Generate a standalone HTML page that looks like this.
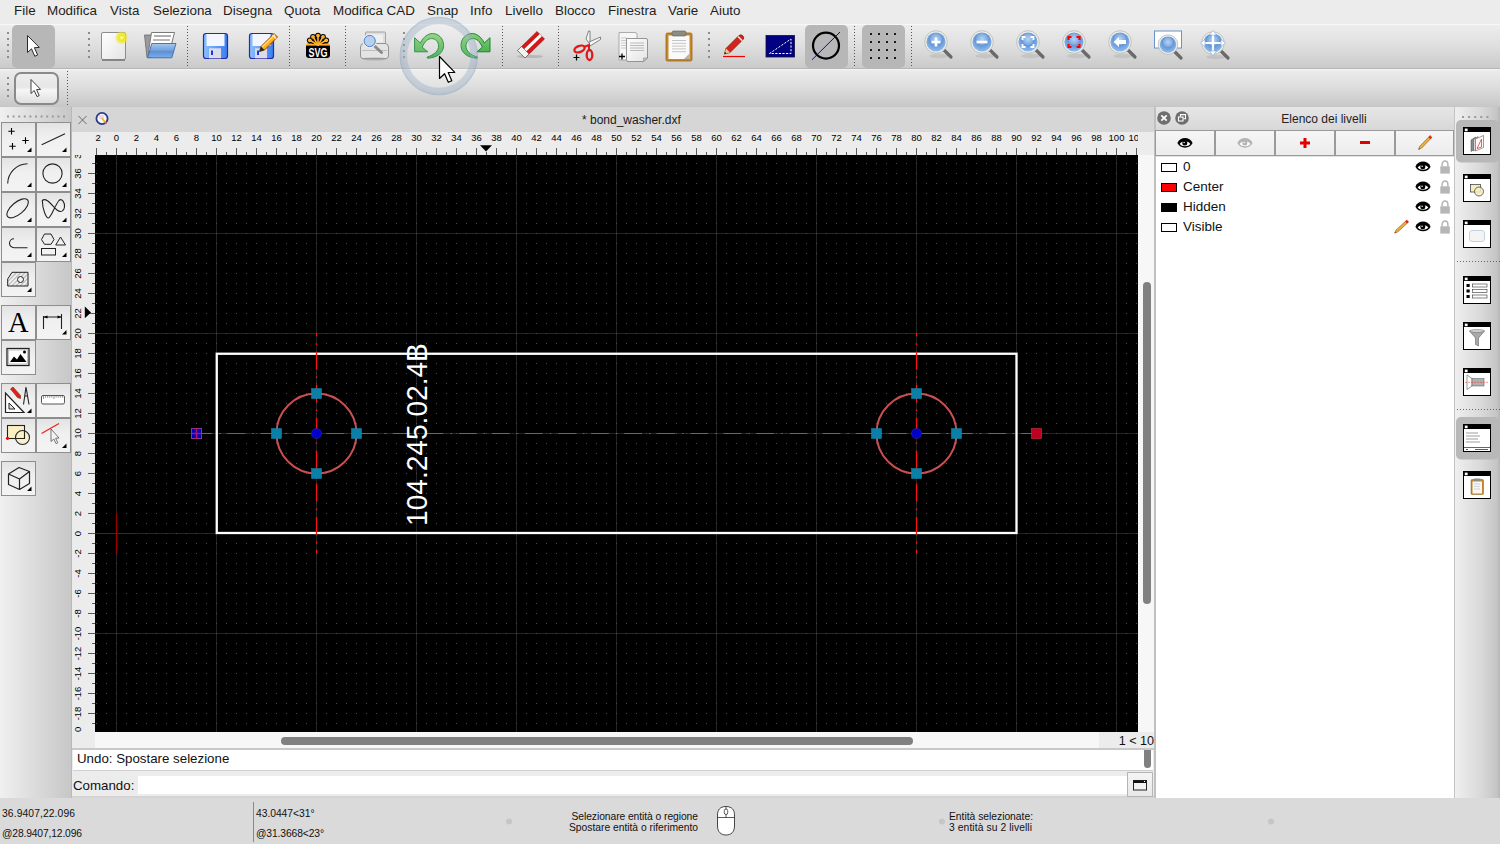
<!DOCTYPE html><html><head><meta charset="utf-8"><style>
*{margin:0;padding:0;box-sizing:border-box}
html,body{width:1500px;height:844px;overflow:hidden;background:#ececec;font-family:"Liberation Sans",sans-serif;color:#1a1a1a;position:relative}
.a{position:absolute}
.menu{position:absolute;left:0;top:0;width:1500px;height:24px;background:#ececec;font-size:13.4px}
.menu span{position:absolute;top:3px;color:#1e1e1e}
.tb1{position:absolute;left:0;top:24px;width:1500px;height:45px;background:linear-gradient(#ededed,#e0e0e0 45%,#cacaca);border-top:1px solid #f7f7f7;border-bottom:1px solid #b6b6b6}
.tb2{position:absolute;left:0;top:69px;width:1500px;height:38px;background:linear-gradient(#ececec,#dedede 45%,#c8c8c8);border-top:1px solid #f4f4f4;border-bottom:1px solid #b4b4b4}
.hdl{position:absolute;width:2px;background:repeating-linear-gradient(#8a8a8a 0 2px,transparent 2px 6px)}
.sep{position:absolute;width:1px;background:repeating-linear-gradient(#6a6a6a 0 1px,transparent 1px 3px)}
.pressed{position:absolute;background:#b7b7b7;border-radius:5px}
</style></head><body>

<div class="menu">
<span style="left:14px">File</span>
<span style="left:47px">Modifica</span>
<span style="left:110px">Vista</span>
<span style="left:153px">Seleziona</span>
<span style="left:223px">Disegna</span>
<span style="left:284px">Quota</span>
<span style="left:333px">Modifica CAD</span>
<span style="left:427px">Snap</span>
<span style="left:470px">Info</span>
<span style="left:505px">Livello</span>
<span style="left:555px">Blocco</span>
<span style="left:608px">Finestra</span>
<span style="left:668px">Varie</span>
<span style="left:710px">Aiuto</span>
</div>
<div class="tb1"></div>
<div class="tb2"></div>
<svg class="a" style="left:0;top:0" width="1500" height="107" viewBox="0 0 1500 107"><defs>
<linearGradient id="gBlue" x1="0" y1="0" x2="0" y2="1"><stop offset="0" stop-color="#a9c8ec"/><stop offset="0.5" stop-color="#6f9fdc"/><stop offset="0.55" stop-color="#5d8fd4"/><stop offset="1" stop-color="#7aaee8"/></linearGradient>
<radialGradient id="gYel"><stop offset="0" stop-color="#ffffe0"/><stop offset="0.35" stop-color="#f0e818"/><stop offset="0.7" stop-color="#eee830" stop-opacity="0.7"/><stop offset="1" stop-color="#f0f000" stop-opacity="0"/></radialGradient>
<linearGradient id="gFloppy" x1="0" y1="0" x2="1" y2="0"><stop offset="0" stop-color="#8cc0ff"/><stop offset="1" stop-color="#3a7ef0"/></linearGradient>
<linearGradient id="gGreen" x1="0" y1="0" x2="0" y2="1"><stop offset="0" stop-color="#86d070"/><stop offset="1" stop-color="#3aa648"/></linearGradient>
<radialGradient id="gLens" cx="0.5" cy="0.35" r="0.6"><stop offset="0" stop-color="#b8d4f4"/><stop offset="0.5" stop-color="#7aa8e0"/><stop offset="0.52" stop-color="#6494d4"/><stop offset="1" stop-color="#8ab8ec"/></radialGradient>
<linearGradient id="gPaper" x1="0" y1="0" x2="1" y2="1"><stop offset="0" stop-color="#ffffff"/><stop offset="1" stop-color="#e4e4e4"/></linearGradient>
</defs><rect x="7" y="32" width="2" height="2" fill="#8c8c8c"/><rect x="7" y="38" width="2" height="2" fill="#8c8c8c"/><rect x="7" y="44" width="2" height="2" fill="#8c8c8c"/><rect x="7" y="50" width="2" height="2" fill="#8c8c8c"/><rect x="7" y="56" width="2" height="2" fill="#8c8c8c"/><rect x="88" y="32" width="2" height="2" fill="#8c8c8c"/><rect x="88" y="38" width="2" height="2" fill="#8c8c8c"/><rect x="88" y="44" width="2" height="2" fill="#8c8c8c"/><rect x="88" y="50" width="2" height="2" fill="#8c8c8c"/><rect x="88" y="56" width="2" height="2" fill="#8c8c8c"/><rect x="403" y="32" width="2" height="2" fill="#8c8c8c"/><rect x="403" y="38" width="2" height="2" fill="#8c8c8c"/><rect x="403" y="44" width="2" height="2" fill="#8c8c8c"/><rect x="403" y="50" width="2" height="2" fill="#8c8c8c"/><rect x="403" y="56" width="2" height="2" fill="#8c8c8c"/><rect x="708" y="32" width="2" height="2" fill="#8c8c8c"/><rect x="708" y="38" width="2" height="2" fill="#8c8c8c"/><rect x="708" y="44" width="2" height="2" fill="#8c8c8c"/><rect x="708" y="50" width="2" height="2" fill="#8c8c8c"/><rect x="708" y="56" width="2" height="2" fill="#8c8c8c"/><rect x="7" y="77" width="2" height="2" fill="#8c8c8c"/><rect x="7" y="83" width="2" height="2" fill="#8c8c8c"/><rect x="7" y="89" width="2" height="2" fill="#8c8c8c"/><rect x="7" y="95" width="2" height="2" fill="#8c8c8c"/><line x1="187.5" y1="26" x2="187.5" y2="66" stroke="#555" stroke-width="1" stroke-dasharray="1 2"/><line x1="289.5" y1="26" x2="289.5" y2="66" stroke="#555" stroke-width="1" stroke-dasharray="1 2"/><line x1="345.5" y1="26" x2="345.5" y2="66" stroke="#555" stroke-width="1" stroke-dasharray="1 2"/><line x1="502.5" y1="26" x2="502.5" y2="66" stroke="#555" stroke-width="1" stroke-dasharray="1 2"/><line x1="558.5" y1="26" x2="558.5" y2="66" stroke="#555" stroke-width="1" stroke-dasharray="1 2"/><line x1="854.5" y1="26" x2="854.5" y2="66" stroke="#555" stroke-width="1" stroke-dasharray="1 2"/><line x1="911.5" y1="26" x2="911.5" y2="66" stroke="#555" stroke-width="1" stroke-dasharray="1 2"/><line x1="67.5" y1="71" x2="67.5" y2="106" stroke="#555" stroke-width="1" stroke-dasharray="1 2"/><rect x="12" y="25" width="43" height="43" rx="5" fill="#b7b7b7"/><rect x="805" y="25" width="43" height="43" rx="5" fill="#b7b7b7"/><rect x="862" y="25" width="43" height="43" rx="5" fill="#b7b7b7"/><path d="M27.5 35.5 L27.5 52.5 L31.5 48.8 L34.8 56.3 L37.6 55 L34.4 47.7 L39.3 47.4 Z" fill="#fff" stroke="#2a2a2a" stroke-width="1" stroke-linejoin="round"/><defs><linearGradient id="gBtn2" x1="0" y1="0" x2="0" y2="1"><stop offset="0" stop-color="#efefef"/><stop offset="0.45" stop-color="#e6e6e6"/><stop offset="0.55" stop-color="#f6f6f6"/><stop offset="1" stop-color="#dedede"/></linearGradient></defs><rect x="15" y="73" width="43" height="31" rx="6" fill="url(#gBtn2)" stroke="#8a8a8a" stroke-width="2"/><path d="M31 79.5 L31 93.5 L34.2 90.5 L37 96.6 L39.2 95.6 L36.6 89.6 L40.6 89.4 Z" fill="#fff" stroke="#2a2a2a" stroke-width="0.9" stroke-linejoin="round"/><rect x="101.5" y="32.5" width="24" height="27" rx="1.5" fill="url(#gPaper)" stroke="#8c8c8c" stroke-width="1"/><line x1="102" y1="60.2" x2="125" y2="60.2" stroke="#7a7a7a" stroke-width="1.3"/><circle cx="121.7" cy="37.7" r="7" fill="url(#gYel)"/><path d="M144.5 35 L152 35 L152 57.5 L147 57.5 Z" fill="#9a9a9a" stroke="#6a6a6a" stroke-width="0.8"/><path d="M151.5 32.5 L174.5 32.5 L171.5 44 L148.5 52 Z" fill="#fff" stroke="#7a7a7a" stroke-width="1"/><rect x="154" y="35" width="17" height="2" fill="#b0b0b0"/><rect x="153" y="39" width="17" height="2" fill="#b8b8b8"/><path d="M151.8 43.5 L176 43.5 L171.8 57.8 L147.5 57.8 Z" fill="url(#gBlue)" stroke="#3a6ab0" stroke-width="0.9"/><rect x="203.5" y="33.5" width="24" height="25" rx="2.5" fill="url(#gFloppy)" stroke="#2828a8" stroke-width="1.2"/><rect x="206.5" y="34" width="18" height="12" fill="#f4f6ff"/><rect x="209" y="48.3" width="12" height="10" fill="#dcdce8"/><rect x="211" y="50.5" width="2" height="4.5" fill="#1a3ae0"/><rect x="249.5" y="33.5" width="24" height="25" rx="2.5" fill="url(#gFloppy)" stroke="#2828a8" stroke-width="1.2"/><rect x="252.5" y="34" width="18" height="12" fill="#f4f6ff"/><rect x="255" y="48.3" width="12" height="10" fill="#dcdce8"/><rect x="257" y="50.5" width="2" height="4.5" fill="#1a3ae0"/><path d="M259.5 51.5 L261 46.5 L274 33.5 L277.5 37 L264.5 50 Z" fill="#ffb020" stroke="#a03a00" stroke-width="1" stroke-linejoin="round"/><path d="M262 47 L275 34.5" stroke="#ffe070" stroke-width="1.2"/><path d="M272.5 35 L276 38.5" stroke="#e8e8e8" stroke-width="1.6"/><path d="M259.5 51.5 L261 46.5 L264.5 50 Z" fill="#203020"/><rect x="306" y="43.5" width="24" height="14.5" rx="3" fill="#000"/><line x1="318" y1="45" x2="309.8" y2="40.3" stroke="#000" stroke-width="3.6" stroke-linecap="round"/><line x1="318" y1="45" x2="313" y2="36.8" stroke="#000" stroke-width="3.6" stroke-linecap="round"/><line x1="318" y1="45" x2="318" y2="35.6" stroke="#000" stroke-width="3.6" stroke-linecap="round"/><line x1="318" y1="45" x2="323" y2="36.8" stroke="#000" stroke-width="3.6" stroke-linecap="round"/><line x1="318" y1="45" x2="326.2" y2="40.3" stroke="#000" stroke-width="3.6" stroke-linecap="round"/><circle cx="309.8" cy="40.3" r="2.9" fill="#000"/><circle cx="313" cy="36.8" r="2.9" fill="#000"/><circle cx="318" cy="35.6" r="2.9" fill="#000"/><circle cx="323" cy="36.8" r="2.9" fill="#000"/><circle cx="326.2" cy="40.3" r="2.9" fill="#000"/><line x1="318" y1="45" x2="309.8" y2="40.3" stroke="#ffb030" stroke-width="1.6" stroke-linecap="round"/><circle cx="309.8" cy="40.3" r="1.9" fill="#ffb030"/><line x1="318" y1="45" x2="313" y2="36.8" stroke="#ffb030" stroke-width="1.6" stroke-linecap="round"/><circle cx="313" cy="36.8" r="1.9" fill="#ffb030"/><line x1="318" y1="45" x2="318" y2="35.6" stroke="#ffb030" stroke-width="1.6" stroke-linecap="round"/><circle cx="318" cy="35.6" r="1.9" fill="#ffb030"/><line x1="318" y1="45" x2="323" y2="36.8" stroke="#ffb030" stroke-width="1.6" stroke-linecap="round"/><circle cx="323" cy="36.8" r="1.9" fill="#ffb030"/><line x1="318" y1="45" x2="326.2" y2="40.3" stroke="#ffb030" stroke-width="1.6" stroke-linecap="round"/><circle cx="326.2" cy="40.3" r="1.9" fill="#ffb030"/><rect x="306" y="44" width="24" height="1.6" fill="#ffb030"/><text x="318" y="57" font-size="13.5" font-weight="bold" fill="#fff" text-anchor="middle" font-family="Liberation Sans" textLength="19" lengthAdjust="spacingAndGlyphs">SVG</text><rect x="365.5" y="32" width="20" height="14" rx="1" fill="#dedede" stroke="#9a9a9a" stroke-width="0.9"/><rect x="368" y="34.5" width="15" height="8" fill="#efefef"/><path d="M360.5 47 Q360.5 43.5 364 43.5 L385 43.5 Q388.5 43.5 388.5 47 L388.5 56 Q388.5 58.5 386 58.5 L363 58.5 Q360.5 58.5 360.5 56 Z" fill="#e4e4e4" stroke="#8a8a8a" stroke-width="0.9"/><line x1="362" y1="50.5" x2="387" y2="50.5" stroke="#b4b4b4" stroke-width="0.8"/><ellipse cx="374.5" cy="59" rx="12" ry="1.6" fill="#9a9a9a" opacity="0.6"/><line x1="374" y1="45.5" x2="381.5" y2="52.5" stroke="#8a8a8a" stroke-width="3" stroke-linecap="round"/><circle cx="369.7" cy="41" r="6.3" fill="#b8d0ee" stroke="#f0f0f0" stroke-width="1.6"/><circle cx="369.7" cy="41" r="5.6" fill="none" stroke="#4a80c8" stroke-width="1"/><g><path d="M414.6 37.7 L420.3 43 C423.5 36.5 428.5 33.5 432.3 33.5 C439 33.5 443.6 39 443.6 45.5 C443.6 52.5 437.5 57.8 427.5 58.2 L427 57.2 C434.5 54.8 438.6 50.8 438.6 46 C438.6 41.8 435.6 38.6 431.6 38.6 C428 38.6 425 41 422.2 47.2 L427.7 51.8 L414.6 51.8 Z" fill="url(#gGreen)" stroke="#14843a" stroke-width="1" stroke-linejoin="round"/></g><g transform="translate(904.6 0) scale(-1 1)"><path d="M414.6 37.7 L420.3 43 C423.5 36.5 428.5 33.5 432.3 33.5 C439 33.5 443.6 39 443.6 45.5 C443.6 52.5 437.5 57.8 427.5 58.2 L427 57.2 C434.5 54.8 438.6 50.8 438.6 46 C438.6 41.8 435.6 38.6 431.6 38.6 C428 38.6 425 41 422.2 47.2 L427.7 51.8 L414.6 51.8 Z" fill="url(#gGreen)" stroke="#14843a" stroke-width="1" stroke-linejoin="round"/></g><ellipse cx="530" cy="56.5" rx="13" ry="1.6" fill="#9a9a9a" opacity="0.5"/><path d="M517.5 50.5 L537 31.5 L544.5 39 L525 58 Z" fill="#d41818" stroke="#8a1010" stroke-width="0.6"/><path d="M521.2 54.2 L540.8 35.2" stroke="#fff" stroke-width="3"/><path d="M517.5 50.5 L521.5 46.5 L529 54 L525 58 Z" fill="#f2f2f2" stroke="#555" stroke-width="0.6"/><path d="M586 39 L588.5 31 L590 31 L590 44 Z" fill="#f4f4f4" stroke="#6a6a6a" stroke-width="0.8"/><path d="M589 42 L600.5 37 L600.5 39.5 L590 46 Z" fill="#f4f4f4" stroke="#6a6a6a" stroke-width="0.8"/><ellipse cx="579.5" cy="49" rx="5.3" ry="3" transform="rotate(-20 579.5 49)" fill="none" stroke="#e01818" stroke-width="2.3"/><ellipse cx="589.5" cy="55" rx="2.8" ry="5" fill="none" stroke="#e01818" stroke-width="2.3"/><path d="M584 47 L589 45 L589 50" fill="none" stroke="#e01818" stroke-width="2"/><path d="M573.5 57.5 L579.5 57.5 M576.5 54.5 L576.5 60.5" stroke="#000" stroke-width="1.2"/><path d="M619 32.5 L635 32.5 Q637 32.5 637 34.5 L637 60 L619 60 Z" fill="#f6f6f6" stroke="#9a9a9a" stroke-width="0.8"/><line x1="621" y1="38.0" x2="627" y2="38.0" stroke="#c0c0c0" stroke-width="0.8"/><line x1="621" y1="40.5" x2="627" y2="40.5" stroke="#c0c0c0" stroke-width="0.8"/><line x1="621" y1="43.0" x2="627" y2="43.0" stroke="#c0c0c0" stroke-width="0.8"/><line x1="621" y1="45.5" x2="627" y2="45.5" stroke="#c0c0c0" stroke-width="0.8"/><line x1="621" y1="48.0" x2="627" y2="48.0" stroke="#c0c0c0" stroke-width="0.8"/><path d="M626.5 38.5 L646 38.5 Q647.5 38.5 647.5 40 L647.5 58 L643.5 61.5 L628 61.5 Q626.5 61.5 626.5 60 Z" fill="url(#gPaper)" stroke="#8a8a8a" stroke-width="0.9"/><path d="M643.5 61.5 L643.5 58 L647.5 58 Z" fill="#c8c8c8" stroke="#8a8a8a" stroke-width="0.6"/><line x1="630" y1="43.0" x2="644" y2="43.0" stroke="#b8b8b8" stroke-width="1"/><line x1="630" y1="45.5" x2="644" y2="45.5" stroke="#b8b8b8" stroke-width="1"/><line x1="630" y1="48.0" x2="644" y2="48.0" stroke="#b8b8b8" stroke-width="1"/><line x1="630" y1="50.5" x2="644" y2="50.5" stroke="#b8b8b8" stroke-width="1"/><path d="M619 56.5 L625 56.5 M622 53.5 L622 59.5" stroke="#000" stroke-width="1.3"/><rect x="666" y="33" width="26" height="28" rx="1.5" fill="#c8862a" stroke="#9a6418" stroke-width="0.8"/><rect x="668.5" y="35.5" width="21" height="23.5" fill="#fafafa"/><rect x="672" y="31" width="14" height="5" rx="1.5" fill="#8c8c80" stroke="#5a5a50" stroke-width="0.6"/><line x1="672" y1="40.5" x2="686" y2="40.5" stroke="#c4c4c4" stroke-width="1"/><line x1="672" y1="43.3" x2="686" y2="43.3" stroke="#c4c4c4" stroke-width="1"/><line x1="672" y1="46.1" x2="686" y2="46.1" stroke="#c4c4c4" stroke-width="1"/><line x1="672" y1="48.9" x2="686" y2="48.9" stroke="#c4c4c4" stroke-width="1"/><line x1="672" y1="51.7" x2="686" y2="51.7" stroke="#c4c4c4" stroke-width="1"/><path d="M684 59 L689.5 53.5 L689.5 59 Z" fill="#b0b0b0"/><line x1="723" y1="56.5" x2="745" y2="56.5" stroke="#e00" stroke-width="1.2"/><path d="M724.5 54 L726 48.5 L739 35.5 Q741 34 743 36 Q744.5 38 743 39.5 L730 52.5 Z" fill="#d82020" stroke="#7a3000" stroke-width="0.9" stroke-linejoin="round"/><path d="M738 36.5 L742.3 40.8" stroke="#e8e8e8" stroke-width="1.6"/><path d="M724.5 54 L726 48.5 L730 52.5 Z" fill="#e8c890"/><path d="M724.3 54.2 L725 51.8 L726.6 53.5 Z" fill="#222"/><rect x="766" y="35.5" width="28.5" height="21.5" fill="#000080" stroke="#101040" stroke-width="0.8"/><path d="M769.5 53.5 L791 39 L791 53.5 Z" fill="none" stroke="#fff" stroke-width="1" stroke-dasharray="2.2 1.4"/><circle cx="826" cy="45.6" r="13" fill="none" stroke="#000" stroke-width="2.2"/><line x1="812" y1="59.8" x2="840" y2="32" stroke="#0000ff" stroke-width="1"/><rect x="870" y="33" width="2" height="2" fill="#1a1a1a"/><rect x="870" y="41" width="2" height="2" fill="#1a1a1a"/><rect x="870" y="49" width="2" height="2" fill="#1a1a1a"/><rect x="870" y="57" width="2" height="2" fill="#1a1a1a"/><rect x="878" y="33" width="2" height="2" fill="#1a1a1a"/><rect x="878" y="41" width="2" height="2" fill="#1a1a1a"/><rect x="878" y="49" width="2" height="2" fill="#1a1a1a"/><rect x="878" y="57" width="2" height="2" fill="#1a1a1a"/><rect x="886" y="33" width="2" height="2" fill="#1a1a1a"/><rect x="886" y="41" width="2" height="2" fill="#1a1a1a"/><rect x="886" y="49" width="2" height="2" fill="#1a1a1a"/><rect x="886" y="57" width="2" height="2" fill="#1a1a1a"/><rect x="894" y="33" width="2" height="2" fill="#1a1a1a"/><rect x="894" y="41" width="2" height="2" fill="#1a1a1a"/><rect x="894" y="49" width="2" height="2" fill="#1a1a1a"/><rect x="894" y="57" width="2" height="2" fill="#1a1a1a"/><line x1="944" y1="50" x2="951" y2="57" stroke="#6a6a6a" stroke-width="3.2" stroke-linecap="round"/><ellipse cx="939" cy="56" rx="10" ry="2.2" fill="#000" opacity="0.08"/><circle cx="936" cy="42" r="11.3" fill="#efefea" stroke="#b8b8b0" stroke-width="0.8"/><circle cx="936" cy="42" r="9.6" fill="url(#gLens)"/><path d="M931.5 42 L940.5 42 M936 37.5 L936 46.5" stroke="#fff" stroke-width="2.6"/><line x1="990" y1="50" x2="997" y2="57" stroke="#6a6a6a" stroke-width="3.2" stroke-linecap="round"/><ellipse cx="985" cy="56" rx="10" ry="2.2" fill="#000" opacity="0.08"/><circle cx="982" cy="42" r="11.3" fill="#efefea" stroke="#b8b8b0" stroke-width="0.8"/><circle cx="982" cy="42" r="9.6" fill="url(#gLens)"/><path d="M976.5 42 L987.5 42" stroke="#fff" stroke-width="2.6"/><line x1="1036" y1="50" x2="1043" y2="57" stroke="#6a6a6a" stroke-width="3.2" stroke-linecap="round"/><ellipse cx="1031" cy="56" rx="10" ry="2.2" fill="#000" opacity="0.08"/><circle cx="1028" cy="42" r="11.3" fill="#efefea" stroke="#b8b8b0" stroke-width="0.8"/><circle cx="1028" cy="42" r="9.6" fill="url(#gLens)"/><path d="M1022.5 40 L1022.5 37 L1025.5 37 M1030.5 37 L1033.5 37 L1033.5 40 M1033.5 44 L1033.5 47 L1030.5 47 M1025.5 47 L1022.5 47 L1022.5 44" fill="none" stroke="#fff" stroke-width="1.8"/><line x1="1082" y1="50" x2="1089" y2="57" stroke="#6a6a6a" stroke-width="3.2" stroke-linecap="round"/><ellipse cx="1077" cy="56" rx="10" ry="2.2" fill="#000" opacity="0.08"/><circle cx="1074" cy="42" r="11.3" fill="#efefea" stroke="#b8b8b0" stroke-width="0.8"/><circle cx="1074" cy="42" r="9.6" fill="url(#gLens)"/><path d="M1068.5 40 L1068.5 37 L1071.5 37 M1076.5 37 L1079.5 37 L1079.5 40 M1079.5 44 L1079.5 47 L1076.5 47 M1071.5 47 L1068.5 47 L1068.5 44" fill="none" stroke="#f00" stroke-width="2.2"/><line x1="1128" y1="50" x2="1135" y2="57" stroke="#6a6a6a" stroke-width="3.2" stroke-linecap="round"/><ellipse cx="1123" cy="56" rx="10" ry="2.2" fill="#000" opacity="0.08"/><circle cx="1120" cy="42" r="11.3" fill="#efefea" stroke="#b8b8b0" stroke-width="0.8"/><circle cx="1120" cy="42" r="9.6" fill="url(#gLens)"/><path d="M1113.5 42 L1119 37 L1119 40 L1126 40 L1126 44 L1119 44 L1119 47 Z" fill="#fff"/><rect x="1154.5" y="31" width="27" height="17" fill="#fff" stroke="#6a90c8" stroke-width="1"/><line x1="1174" y1="51" x2="1181" y2="58" stroke="#6a6a6a" stroke-width="3.2" stroke-linecap="round"/><circle cx="1168" cy="44.6" r="9.8" fill="#efefea" stroke="#b8b8b0" stroke-width="0.8"/><circle cx="1168" cy="44.6" r="8.2" fill="url(#gLens)"/><line x1="1221" y1="51" x2="1228" y2="58" stroke="#6a6a6a" stroke-width="3.2" stroke-linecap="round"/><ellipse cx="1216" cy="57" rx="10" ry="2.2" fill="#000" opacity="0.08"/><circle cx="1213" cy="43" r="11.3" fill="#efefea" stroke="#b8b8b0" stroke-width="0.8"/><circle cx="1213" cy="43" r="9.6" fill="url(#gLens)"/><path d="M1213 31.5 L1213 54.5 M1201.5 43 L1224.5 43" stroke="#fff" stroke-width="2.2"/><path d="M1209.5 35 L1213 30.5 L1216.5 35 Z M1209.5 51 L1213 55.5 L1216.5 51 Z M1205 39.5 L1200.5 43 L1205 46.5 Z M1221 39.5 L1225.5 43 L1221 46.5 Z" fill="#fff" stroke="#6a9ad8" stroke-width="0.5"/><circle cx="438.8" cy="56" r="35.5" fill="#ffffff" fill-opacity="0.13" stroke="#9ab0c6" stroke-opacity="0.42" stroke-width="7.5"/><circle cx="438.8" cy="56" r="38.6" fill="none" stroke="#8aa2ba" stroke-opacity="0.25" stroke-width="1.2"/><path d="M439.5 56.5 L439.5 78.5 L444.6 73.7 L448.3 82.3 L451.8 80.8 L448.2 72.5 L454.8 72.3 Z" fill="#fff" stroke="#000" stroke-width="1.2" stroke-linejoin="round"/></svg>
<div class="a" style="left:0;top:106px;width:1500px;height:2px;background:#c6c6c6"></div>
<div class="a" style="left:0;top:107px;width:71px;height:691px;background:linear-gradient(90deg,#f0f0f0,#d9d9d9 55%,#c7c7c7)"></div>
<div class="a" style="left:71px;top:107px;width:1px;height:691px;background:#b9b9b9"></div>
<div class="a" style="left:1px;top:122px;width:35px;height:35px;border:1px solid #8e8e8e;background:linear-gradient(#e3e3e3,#f0f0f0 45%,#f3f3f3)"></div><div class="a" style="left:36px;top:122px;width:35px;height:35px;border:1px solid #8e8e8e;background:linear-gradient(#e3e3e3,#f0f0f0 45%,#f3f3f3)"></div><div class="a" style="left:1px;top:157px;width:35px;height:35px;border:1px solid #8e8e8e;background:linear-gradient(#e3e3e3,#f0f0f0 45%,#f3f3f3)"></div><div class="a" style="left:36px;top:157px;width:35px;height:35px;border:1px solid #8e8e8e;background:linear-gradient(#e3e3e3,#f0f0f0 45%,#f3f3f3)"></div><div class="a" style="left:1px;top:192px;width:35px;height:35px;border:1px solid #8e8e8e;background:linear-gradient(#e3e3e3,#f0f0f0 45%,#f3f3f3)"></div><div class="a" style="left:36px;top:192px;width:35px;height:35px;border:1px solid #8e8e8e;background:linear-gradient(#e3e3e3,#f0f0f0 45%,#f3f3f3)"></div><div class="a" style="left:1px;top:227px;width:35px;height:35px;border:1px solid #8e8e8e;background:linear-gradient(#e3e3e3,#f0f0f0 45%,#f3f3f3)"></div><div class="a" style="left:36px;top:227px;width:35px;height:35px;border:1px solid #8e8e8e;background:linear-gradient(#e3e3e3,#f0f0f0 45%,#f3f3f3)"></div><div class="a" style="left:1px;top:262px;width:35px;height:35px;border:1px solid #8e8e8e;background:linear-gradient(#e3e3e3,#f0f0f0 45%,#f3f3f3)"></div><div class="a" style="left:1px;top:305px;width:35px;height:35px;border:1px solid #8e8e8e;background:linear-gradient(#e3e3e3,#f0f0f0 45%,#f3f3f3)"></div><div class="a" style="left:36px;top:305px;width:35px;height:35px;border:1px solid #8e8e8e;background:linear-gradient(#e3e3e3,#f0f0f0 45%,#f3f3f3)"></div><div class="a" style="left:1px;top:340px;width:35px;height:35px;border:1px solid #8e8e8e;background:linear-gradient(#e3e3e3,#f0f0f0 45%,#f3f3f3)"></div><div class="a" style="left:1px;top:383px;width:35px;height:35px;border:1px solid #8e8e8e;background:linear-gradient(#e3e3e3,#f0f0f0 45%,#f3f3f3)"></div><div class="a" style="left:36px;top:383px;width:35px;height:35px;border:1px solid #8e8e8e;background:linear-gradient(#e3e3e3,#f0f0f0 45%,#f3f3f3)"></div><div class="a" style="left:1px;top:418px;width:35px;height:35px;border:1px solid #8e8e8e;background:linear-gradient(#e3e3e3,#f0f0f0 45%,#f3f3f3)"></div><div class="a" style="left:36px;top:418px;width:35px;height:35px;border:1px solid #8e8e8e;background:linear-gradient(#e3e3e3,#f0f0f0 45%,#f3f3f3)"></div><div class="a" style="left:1px;top:461px;width:35px;height:35px;border:1px solid #8e8e8e;background:linear-gradient(#e3e3e3,#f0f0f0 45%,#f3f3f3)"></div><svg class="a" style="left:0;top:107px" width="72" height="400" viewBox="0 107 72 400"><rect x="7.0" y="115.5" width="2" height="2" fill="#9a9a9a"/><rect x="12.6" y="115.5" width="2" height="2" fill="#9a9a9a"/><rect x="18.2" y="115.5" width="2" height="2" fill="#9a9a9a"/><rect x="23.8" y="115.5" width="2" height="2" fill="#9a9a9a"/><rect x="29.4" y="115.5" width="2" height="2" fill="#9a9a9a"/><rect x="35.0" y="115.5" width="2" height="2" fill="#9a9a9a"/><rect x="40.6" y="115.5" width="2" height="2" fill="#9a9a9a"/><rect x="46.2" y="115.5" width="2" height="2" fill="#9a9a9a"/><rect x="51.8" y="115.5" width="2" height="2" fill="#9a9a9a"/><rect x="57.4" y="115.5" width="2" height="2" fill="#9a9a9a"/><rect x="63.0" y="115.5" width="2" height="2" fill="#9a9a9a"/><path d="M8.3 131.3 L14.7 131.3 M11.5 128.10000000000002 L11.5 134.5" stroke="#000" stroke-width="1.1"/><path d="M22.3 140.5 L28.7 140.5 M25.5 137.3 L25.5 143.7" stroke="#000" stroke-width="1.1"/><path d="M9.3 146.3 L15.7 146.3 M12.5 143.10000000000002 L12.5 149.5" stroke="#000" stroke-width="1.1"/><path d="M27.0 152 L31.5 152 L31.5 147.5 Z" fill="#000"/><line x1="41.7" y1="144.8" x2="65" y2="133.7" stroke="#222" fill="none" stroke-width="1.1"/><path d="M62.0 152 L66.5 152 L66.5 147.5 Z" fill="#000"/><path d="M7.7 183.5 A20 20 0 0 1 27.5 163.8" stroke="#222" fill="none" stroke-width="1.1"/><path d="M27.0 187 L31.5 187 L31.5 182.5 Z" fill="#000"/><circle cx="52.5" cy="173.5" r="9.6" stroke="#222" fill="none" stroke-width="1.1"/><path d="M62.0 187 L66.5 187 L66.5 182.5 Z" fill="#000"/><ellipse cx="17.6" cy="208.3" rx="13" ry="6" transform="rotate(-40 17.6 208.3)" stroke="#222" fill="none" stroke-width="1.1"/><path d="M27.0 222 L31.5 222 L31.5 217.5 Z" fill="#000"/><path d="M42.3 200.5 C42.5 209 46 218 48.5 218 C51 218 55 205 59 200.5 C62 197.5 65 203 64.5 207 C64 211 61 213 57 210 C53 207 46.5 196.5 42.3 200.5 Z" stroke="#222" fill="none" stroke-width="1.1"/><path d="M62.0 222 L66.5 222 L66.5 217.5 Z" fill="#000"/><path d="M14 238.8 A4.5 4.5 0 0 0 14 247.8 L27.5 247.8" stroke="#222" fill="none" stroke-width="1.1"/><path d="M27.0 257 L31.5 257 L31.5 252.5 Z" fill="#000"/><path d="M44.5 234 L51 234 L54 239.5 L51 244.3 L44.5 244.3 L41.5 239.5 Z" stroke="#222" fill="none" stroke-width="1"/><path d="M55.7 245 L60.5 237 L65.5 245 Z" stroke="#222" fill="none" stroke-width="1"/><rect x="41.5" y="248.5" width="14" height="6.5" stroke="#222" fill="none" stroke-width="1"/><path d="M62.0 257 L66.5 257 L66.5 252.5 Z" fill="#000"/><defs><pattern id="hatch" width="3" height="3" patternUnits="userSpaceOnUse" patternTransform="rotate(45)"><line x1="0" y1="0" x2="0" y2="3" stroke="#666" stroke-width="0.9"/></pattern></defs><path d="M7.7 286 L7.7 279 L12 272.3 L28 272.3 L28 286 Z" fill="url(#hatch)" stroke="#222" stroke-width="1"/><circle cx="20.5" cy="279.5" r="3" fill="#f2f2f2" stroke="#222" stroke-width="1"/><path d="M27.0 292 L31.5 292 L31.5 287.5 Z" fill="#000"/><text x="18.3" y="332.2" font-size="28.5" fill="#000" text-anchor="middle" font-family="Liberation Serif">A</text><path d="M43.5 316 L43.5 329 M61.5 314 L61.5 329 M43.5 317 L61.5 317" stroke="#222" stroke-width="1.1"/><path d="M43.5 317 L47.5 315.5 L47.5 318.5 Z M61.5 317 L57.5 315.5 L57.5 318.5 Z" fill="#000"/><path d="M62.0 334.5 L66.5 334.5 L66.5 330.0 Z" fill="#000"/><rect x="7" y="348.5" width="22" height="17" fill="#fff" stroke="#222" stroke-width="1.3"/><rect x="8.5" y="350" width="19" height="14" fill="none" stroke="#888" stroke-width="0.5"/><path d="M10 362 L14 356.5 L17 359.5 L20.5 354 L26.5 362 Z" fill="#000"/><circle cx="24.5" cy="351.9" r="1.5" fill="#000"/><path d="M5.5 393 L5.5 412.5 L24 412.5 Z" fill="#fff" stroke="#222" stroke-width="1.2"/><path d="M9 403 L9 409 L15 409 Z" fill="#e0e0e0" stroke="#222" stroke-width="1"/><path d="M10.5 389 L13 387 L20.5 395.5 L20.5 398.5 L17.5 397.5 Z" fill="#e02020" stroke="#7a2000" stroke-width="0.6"/><path d="M26 387 L23.5 404.5 M26 387 L29 404.5 M24.5 396 L28 396" stroke="#222" stroke-width="1.1" fill="none"/><path d="M27.0 413 L31.5 413 L31.5 408.5 Z" fill="#000"/><rect x="41.5" y="395.5" width="23" height="8.5" rx="1.5" fill="#fff" stroke="#555" stroke-width="1"/><line x1="43.5" y1="396" x2="43.5" y2="399" stroke="#555" stroke-width="0.6"/><line x1="45.6" y1="396" x2="45.6" y2="397.8" stroke="#555" stroke-width="0.6"/><line x1="47.7" y1="396" x2="47.7" y2="397.8" stroke="#555" stroke-width="0.6"/><line x1="49.8" y1="396" x2="49.8" y2="397.8" stroke="#555" stroke-width="0.6"/><line x1="51.9" y1="396" x2="51.9" y2="397.8" stroke="#555" stroke-width="0.6"/><line x1="54.0" y1="396" x2="54.0" y2="399" stroke="#555" stroke-width="0.6"/><line x1="56.1" y1="396" x2="56.1" y2="397.8" stroke="#555" stroke-width="0.6"/><line x1="58.2" y1="396" x2="58.2" y2="397.8" stroke="#555" stroke-width="0.6"/><line x1="60.3" y1="396" x2="60.3" y2="397.8" stroke="#555" stroke-width="0.6"/><line x1="62.4" y1="396" x2="62.4" y2="397.8" stroke="#555" stroke-width="0.6"/><rect x="7.5" y="425.5" width="17" height="13" fill="#fbf0c4" stroke="#222" stroke-width="1.1"/><circle cx="22.5" cy="437.5" r="7" fill="#fbf0c4" fill-opacity="0.85" stroke="#222" stroke-width="1.1"/><path d="M15.5 438.5 L24.5 438.5 L24.5 430.7" fill="none" stroke="#222" stroke-width="1.1"/><circle cx="7.5" cy="438.3" r="1.6" fill="#f00"/><line x1="41.5" y1="433.5" x2="59" y2="423.5" stroke="#f02020" stroke-width="1.3"/><path d="M51 429 L51 441.5 L53.8 439 L56 443.6 L57.8 442.8 L55.6 438.2 L59 438 Z" fill="#f4f4f4" stroke="#555" stroke-width="0.8" stroke-linejoin="round"/><path d="M62.0 448 L66.5 448 L66.5 443.5 Z" fill="#000"/><path d="M8.5 474 L19 467.5 L29.5 471.5 L29.5 483.5 L19.5 489.5 L8.5 484.5 Z M8.5 474 L19.5 479 L29.5 471.5 M19.5 479 L19.5 489.5" fill="none" stroke="#222" stroke-width="1.2" stroke-linejoin="round"/><path d="M27.0 491 L31.5 491 L31.5 486.5 Z" fill="#000"/></svg>
<div class="a" style="left:72px;top:107px;width:1082px;height:25px;background:#d6d6d6"></div>
<div class="a" style="left:582px;top:113px;font-size:12px;color:#1a1a1a">* bond_washer.dxf</div>
<div class="a" style="left:72px;top:132px;width:1082px;height:23px;background:#ececec"></div>
<div class="a" style="left:72px;top:132px;width:23px;height:616px;background:#ececec"></div>
<svg class="a" style="left:95px;top:132px" width="1043" height="23" viewBox="95 132 1043 23"><line x1="96.5" y1="148" x2="96.5" y2="155" stroke="#5a5a5a"/><text x="96.5" y="141" font-size="9.5" text-anchor="middle" fill="#000" font-family="Liberation Sans">-2</text><line x1="106.5" y1="152" x2="106.5" y2="155" stroke="#5a5a5a"/><line x1="116.5" y1="148" x2="116.5" y2="155" stroke="#5a5a5a"/><text x="116.5" y="141" font-size="9.5" text-anchor="middle" fill="#000" font-family="Liberation Sans">0</text><line x1="126.5" y1="152" x2="126.5" y2="155" stroke="#5a5a5a"/><line x1="136.5" y1="148" x2="136.5" y2="155" stroke="#5a5a5a"/><text x="136.5" y="141" font-size="9.5" text-anchor="middle" fill="#000" font-family="Liberation Sans">2</text><line x1="146.5" y1="152" x2="146.5" y2="155" stroke="#5a5a5a"/><line x1="156.5" y1="148" x2="156.5" y2="155" stroke="#5a5a5a"/><text x="156.5" y="141" font-size="9.5" text-anchor="middle" fill="#000" font-family="Liberation Sans">4</text><line x1="166.5" y1="152" x2="166.5" y2="155" stroke="#5a5a5a"/><line x1="176.5" y1="148" x2="176.5" y2="155" stroke="#5a5a5a"/><text x="176.5" y="141" font-size="9.5" text-anchor="middle" fill="#000" font-family="Liberation Sans">6</text><line x1="186.5" y1="152" x2="186.5" y2="155" stroke="#5a5a5a"/><line x1="196.5" y1="148" x2="196.5" y2="155" stroke="#5a5a5a"/><text x="196.5" y="141" font-size="9.5" text-anchor="middle" fill="#000" font-family="Liberation Sans">8</text><line x1="206.5" y1="152" x2="206.5" y2="155" stroke="#5a5a5a"/><line x1="216.5" y1="148" x2="216.5" y2="155" stroke="#5a5a5a"/><text x="216.5" y="141" font-size="9.5" text-anchor="middle" fill="#000" font-family="Liberation Sans">10</text><line x1="226.5" y1="152" x2="226.5" y2="155" stroke="#5a5a5a"/><line x1="236.5" y1="148" x2="236.5" y2="155" stroke="#5a5a5a"/><text x="236.5" y="141" font-size="9.5" text-anchor="middle" fill="#000" font-family="Liberation Sans">12</text><line x1="246.5" y1="152" x2="246.5" y2="155" stroke="#5a5a5a"/><line x1="256.5" y1="148" x2="256.5" y2="155" stroke="#5a5a5a"/><text x="256.5" y="141" font-size="9.5" text-anchor="middle" fill="#000" font-family="Liberation Sans">14</text><line x1="266.5" y1="152" x2="266.5" y2="155" stroke="#5a5a5a"/><line x1="276.5" y1="148" x2="276.5" y2="155" stroke="#5a5a5a"/><text x="276.5" y="141" font-size="9.5" text-anchor="middle" fill="#000" font-family="Liberation Sans">16</text><line x1="286.5" y1="152" x2="286.5" y2="155" stroke="#5a5a5a"/><line x1="296.5" y1="148" x2="296.5" y2="155" stroke="#5a5a5a"/><text x="296.5" y="141" font-size="9.5" text-anchor="middle" fill="#000" font-family="Liberation Sans">18</text><line x1="306.5" y1="152" x2="306.5" y2="155" stroke="#5a5a5a"/><line x1="316.5" y1="148" x2="316.5" y2="155" stroke="#5a5a5a"/><text x="316.5" y="141" font-size="9.5" text-anchor="middle" fill="#000" font-family="Liberation Sans">20</text><line x1="326.5" y1="152" x2="326.5" y2="155" stroke="#5a5a5a"/><line x1="336.5" y1="148" x2="336.5" y2="155" stroke="#5a5a5a"/><text x="336.5" y="141" font-size="9.5" text-anchor="middle" fill="#000" font-family="Liberation Sans">22</text><line x1="346.5" y1="152" x2="346.5" y2="155" stroke="#5a5a5a"/><line x1="356.5" y1="148" x2="356.5" y2="155" stroke="#5a5a5a"/><text x="356.5" y="141" font-size="9.5" text-anchor="middle" fill="#000" font-family="Liberation Sans">24</text><line x1="366.5" y1="152" x2="366.5" y2="155" stroke="#5a5a5a"/><line x1="376.5" y1="148" x2="376.5" y2="155" stroke="#5a5a5a"/><text x="376.5" y="141" font-size="9.5" text-anchor="middle" fill="#000" font-family="Liberation Sans">26</text><line x1="386.5" y1="152" x2="386.5" y2="155" stroke="#5a5a5a"/><line x1="396.5" y1="148" x2="396.5" y2="155" stroke="#5a5a5a"/><text x="396.5" y="141" font-size="9.5" text-anchor="middle" fill="#000" font-family="Liberation Sans">28</text><line x1="406.5" y1="152" x2="406.5" y2="155" stroke="#5a5a5a"/><line x1="416.5" y1="148" x2="416.5" y2="155" stroke="#5a5a5a"/><text x="416.5" y="141" font-size="9.5" text-anchor="middle" fill="#000" font-family="Liberation Sans">30</text><line x1="426.5" y1="152" x2="426.5" y2="155" stroke="#5a5a5a"/><line x1="436.5" y1="148" x2="436.5" y2="155" stroke="#5a5a5a"/><text x="436.5" y="141" font-size="9.5" text-anchor="middle" fill="#000" font-family="Liberation Sans">32</text><line x1="446.5" y1="152" x2="446.5" y2="155" stroke="#5a5a5a"/><line x1="456.5" y1="148" x2="456.5" y2="155" stroke="#5a5a5a"/><text x="456.5" y="141" font-size="9.5" text-anchor="middle" fill="#000" font-family="Liberation Sans">34</text><line x1="466.5" y1="152" x2="466.5" y2="155" stroke="#5a5a5a"/><line x1="476.5" y1="148" x2="476.5" y2="155" stroke="#5a5a5a"/><text x="476.5" y="141" font-size="9.5" text-anchor="middle" fill="#000" font-family="Liberation Sans">36</text><line x1="486.5" y1="152" x2="486.5" y2="155" stroke="#5a5a5a"/><line x1="496.5" y1="148" x2="496.5" y2="155" stroke="#5a5a5a"/><text x="496.5" y="141" font-size="9.5" text-anchor="middle" fill="#000" font-family="Liberation Sans">38</text><line x1="506.5" y1="152" x2="506.5" y2="155" stroke="#5a5a5a"/><line x1="516.5" y1="148" x2="516.5" y2="155" stroke="#5a5a5a"/><text x="516.5" y="141" font-size="9.5" text-anchor="middle" fill="#000" font-family="Liberation Sans">40</text><line x1="526.5" y1="152" x2="526.5" y2="155" stroke="#5a5a5a"/><line x1="536.5" y1="148" x2="536.5" y2="155" stroke="#5a5a5a"/><text x="536.5" y="141" font-size="9.5" text-anchor="middle" fill="#000" font-family="Liberation Sans">42</text><line x1="546.5" y1="152" x2="546.5" y2="155" stroke="#5a5a5a"/><line x1="556.5" y1="148" x2="556.5" y2="155" stroke="#5a5a5a"/><text x="556.5" y="141" font-size="9.5" text-anchor="middle" fill="#000" font-family="Liberation Sans">44</text><line x1="566.5" y1="152" x2="566.5" y2="155" stroke="#5a5a5a"/><line x1="576.5" y1="148" x2="576.5" y2="155" stroke="#5a5a5a"/><text x="576.5" y="141" font-size="9.5" text-anchor="middle" fill="#000" font-family="Liberation Sans">46</text><line x1="586.5" y1="152" x2="586.5" y2="155" stroke="#5a5a5a"/><line x1="596.5" y1="148" x2="596.5" y2="155" stroke="#5a5a5a"/><text x="596.5" y="141" font-size="9.5" text-anchor="middle" fill="#000" font-family="Liberation Sans">48</text><line x1="606.5" y1="152" x2="606.5" y2="155" stroke="#5a5a5a"/><line x1="616.5" y1="148" x2="616.5" y2="155" stroke="#5a5a5a"/><text x="616.5" y="141" font-size="9.5" text-anchor="middle" fill="#000" font-family="Liberation Sans">50</text><line x1="626.5" y1="152" x2="626.5" y2="155" stroke="#5a5a5a"/><line x1="636.5" y1="148" x2="636.5" y2="155" stroke="#5a5a5a"/><text x="636.5" y="141" font-size="9.5" text-anchor="middle" fill="#000" font-family="Liberation Sans">52</text><line x1="646.5" y1="152" x2="646.5" y2="155" stroke="#5a5a5a"/><line x1="656.5" y1="148" x2="656.5" y2="155" stroke="#5a5a5a"/><text x="656.5" y="141" font-size="9.5" text-anchor="middle" fill="#000" font-family="Liberation Sans">54</text><line x1="666.5" y1="152" x2="666.5" y2="155" stroke="#5a5a5a"/><line x1="676.5" y1="148" x2="676.5" y2="155" stroke="#5a5a5a"/><text x="676.5" y="141" font-size="9.5" text-anchor="middle" fill="#000" font-family="Liberation Sans">56</text><line x1="686.5" y1="152" x2="686.5" y2="155" stroke="#5a5a5a"/><line x1="696.5" y1="148" x2="696.5" y2="155" stroke="#5a5a5a"/><text x="696.5" y="141" font-size="9.5" text-anchor="middle" fill="#000" font-family="Liberation Sans">58</text><line x1="706.5" y1="152" x2="706.5" y2="155" stroke="#5a5a5a"/><line x1="716.5" y1="148" x2="716.5" y2="155" stroke="#5a5a5a"/><text x="716.5" y="141" font-size="9.5" text-anchor="middle" fill="#000" font-family="Liberation Sans">60</text><line x1="726.5" y1="152" x2="726.5" y2="155" stroke="#5a5a5a"/><line x1="736.5" y1="148" x2="736.5" y2="155" stroke="#5a5a5a"/><text x="736.5" y="141" font-size="9.5" text-anchor="middle" fill="#000" font-family="Liberation Sans">62</text><line x1="746.5" y1="152" x2="746.5" y2="155" stroke="#5a5a5a"/><line x1="756.5" y1="148" x2="756.5" y2="155" stroke="#5a5a5a"/><text x="756.5" y="141" font-size="9.5" text-anchor="middle" fill="#000" font-family="Liberation Sans">64</text><line x1="766.5" y1="152" x2="766.5" y2="155" stroke="#5a5a5a"/><line x1="776.5" y1="148" x2="776.5" y2="155" stroke="#5a5a5a"/><text x="776.5" y="141" font-size="9.5" text-anchor="middle" fill="#000" font-family="Liberation Sans">66</text><line x1="786.5" y1="152" x2="786.5" y2="155" stroke="#5a5a5a"/><line x1="796.5" y1="148" x2="796.5" y2="155" stroke="#5a5a5a"/><text x="796.5" y="141" font-size="9.5" text-anchor="middle" fill="#000" font-family="Liberation Sans">68</text><line x1="806.5" y1="152" x2="806.5" y2="155" stroke="#5a5a5a"/><line x1="816.5" y1="148" x2="816.5" y2="155" stroke="#5a5a5a"/><text x="816.5" y="141" font-size="9.5" text-anchor="middle" fill="#000" font-family="Liberation Sans">70</text><line x1="826.5" y1="152" x2="826.5" y2="155" stroke="#5a5a5a"/><line x1="836.5" y1="148" x2="836.5" y2="155" stroke="#5a5a5a"/><text x="836.5" y="141" font-size="9.5" text-anchor="middle" fill="#000" font-family="Liberation Sans">72</text><line x1="846.5" y1="152" x2="846.5" y2="155" stroke="#5a5a5a"/><line x1="856.5" y1="148" x2="856.5" y2="155" stroke="#5a5a5a"/><text x="856.5" y="141" font-size="9.5" text-anchor="middle" fill="#000" font-family="Liberation Sans">74</text><line x1="866.5" y1="152" x2="866.5" y2="155" stroke="#5a5a5a"/><line x1="876.5" y1="148" x2="876.5" y2="155" stroke="#5a5a5a"/><text x="876.5" y="141" font-size="9.5" text-anchor="middle" fill="#000" font-family="Liberation Sans">76</text><line x1="886.5" y1="152" x2="886.5" y2="155" stroke="#5a5a5a"/><line x1="896.5" y1="148" x2="896.5" y2="155" stroke="#5a5a5a"/><text x="896.5" y="141" font-size="9.5" text-anchor="middle" fill="#000" font-family="Liberation Sans">78</text><line x1="906.5" y1="152" x2="906.5" y2="155" stroke="#5a5a5a"/><line x1="916.5" y1="148" x2="916.5" y2="155" stroke="#5a5a5a"/><text x="916.5" y="141" font-size="9.5" text-anchor="middle" fill="#000" font-family="Liberation Sans">80</text><line x1="926.5" y1="152" x2="926.5" y2="155" stroke="#5a5a5a"/><line x1="936.5" y1="148" x2="936.5" y2="155" stroke="#5a5a5a"/><text x="936.5" y="141" font-size="9.5" text-anchor="middle" fill="#000" font-family="Liberation Sans">82</text><line x1="946.5" y1="152" x2="946.5" y2="155" stroke="#5a5a5a"/><line x1="956.5" y1="148" x2="956.5" y2="155" stroke="#5a5a5a"/><text x="956.5" y="141" font-size="9.5" text-anchor="middle" fill="#000" font-family="Liberation Sans">84</text><line x1="966.5" y1="152" x2="966.5" y2="155" stroke="#5a5a5a"/><line x1="976.5" y1="148" x2="976.5" y2="155" stroke="#5a5a5a"/><text x="976.5" y="141" font-size="9.5" text-anchor="middle" fill="#000" font-family="Liberation Sans">86</text><line x1="986.5" y1="152" x2="986.5" y2="155" stroke="#5a5a5a"/><line x1="996.5" y1="148" x2="996.5" y2="155" stroke="#5a5a5a"/><text x="996.5" y="141" font-size="9.5" text-anchor="middle" fill="#000" font-family="Liberation Sans">88</text><line x1="1006.5" y1="152" x2="1006.5" y2="155" stroke="#5a5a5a"/><line x1="1016.5" y1="148" x2="1016.5" y2="155" stroke="#5a5a5a"/><text x="1016.5" y="141" font-size="9.5" text-anchor="middle" fill="#000" font-family="Liberation Sans">90</text><line x1="1026.5" y1="152" x2="1026.5" y2="155" stroke="#5a5a5a"/><line x1="1036.5" y1="148" x2="1036.5" y2="155" stroke="#5a5a5a"/><text x="1036.5" y="141" font-size="9.5" text-anchor="middle" fill="#000" font-family="Liberation Sans">92</text><line x1="1046.5" y1="152" x2="1046.5" y2="155" stroke="#5a5a5a"/><line x1="1056.5" y1="148" x2="1056.5" y2="155" stroke="#5a5a5a"/><text x="1056.5" y="141" font-size="9.5" text-anchor="middle" fill="#000" font-family="Liberation Sans">94</text><line x1="1066.5" y1="152" x2="1066.5" y2="155" stroke="#5a5a5a"/><line x1="1076.5" y1="148" x2="1076.5" y2="155" stroke="#5a5a5a"/><text x="1076.5" y="141" font-size="9.5" text-anchor="middle" fill="#000" font-family="Liberation Sans">96</text><line x1="1086.5" y1="152" x2="1086.5" y2="155" stroke="#5a5a5a"/><line x1="1096.5" y1="148" x2="1096.5" y2="155" stroke="#5a5a5a"/><text x="1096.5" y="141" font-size="9.5" text-anchor="middle" fill="#000" font-family="Liberation Sans">98</text><line x1="1106.5" y1="152" x2="1106.5" y2="155" stroke="#5a5a5a"/><line x1="1116.5" y1="148" x2="1116.5" y2="155" stroke="#5a5a5a"/><text x="1116.5" y="141" font-size="9.5" text-anchor="middle" fill="#000" font-family="Liberation Sans">100</text><line x1="1126.5" y1="152" x2="1126.5" y2="155" stroke="#5a5a5a"/><line x1="1136.5" y1="148" x2="1136.5" y2="155" stroke="#5a5a5a"/><text x="1136.5" y="141" font-size="9.5" text-anchor="middle" fill="#000" font-family="Liberation Sans">102</text><path d="M480 145.2 L492 145.2 L486 151.4 Z" fill="#000"/></svg>
<svg class="a" style="left:72px;top:155px" width="23" height="577" viewBox="72 155 23 577"><line x1="88" y1="733.5" x2="95" y2="733.5" stroke="#5a5a5a"/><text transform="translate(80.6 733.5) rotate(-90)" x="0" y="0" font-size="9.5" text-anchor="middle" fill="#000" font-family="Liberation Sans">-20</text><line x1="92" y1="723.5" x2="95" y2="723.5" stroke="#5a5a5a"/><line x1="88" y1="713.5" x2="95" y2="713.5" stroke="#5a5a5a"/><text transform="translate(80.6 713.5) rotate(-90)" x="0" y="0" font-size="9.5" text-anchor="middle" fill="#000" font-family="Liberation Sans">-18</text><line x1="92" y1="703.5" x2="95" y2="703.5" stroke="#5a5a5a"/><line x1="88" y1="693.5" x2="95" y2="693.5" stroke="#5a5a5a"/><text transform="translate(80.6 693.5) rotate(-90)" x="0" y="0" font-size="9.5" text-anchor="middle" fill="#000" font-family="Liberation Sans">-16</text><line x1="92" y1="683.5" x2="95" y2="683.5" stroke="#5a5a5a"/><line x1="88" y1="673.5" x2="95" y2="673.5" stroke="#5a5a5a"/><text transform="translate(80.6 673.5) rotate(-90)" x="0" y="0" font-size="9.5" text-anchor="middle" fill="#000" font-family="Liberation Sans">-14</text><line x1="92" y1="663.5" x2="95" y2="663.5" stroke="#5a5a5a"/><line x1="88" y1="653.5" x2="95" y2="653.5" stroke="#5a5a5a"/><text transform="translate(80.6 653.5) rotate(-90)" x="0" y="0" font-size="9.5" text-anchor="middle" fill="#000" font-family="Liberation Sans">-12</text><line x1="92" y1="643.5" x2="95" y2="643.5" stroke="#5a5a5a"/><line x1="88" y1="633.5" x2="95" y2="633.5" stroke="#5a5a5a"/><text transform="translate(80.6 633.5) rotate(-90)" x="0" y="0" font-size="9.5" text-anchor="middle" fill="#000" font-family="Liberation Sans">-10</text><line x1="92" y1="623.5" x2="95" y2="623.5" stroke="#5a5a5a"/><line x1="88" y1="613.5" x2="95" y2="613.5" stroke="#5a5a5a"/><text transform="translate(80.6 613.5) rotate(-90)" x="0" y="0" font-size="9.5" text-anchor="middle" fill="#000" font-family="Liberation Sans">-8</text><line x1="92" y1="603.5" x2="95" y2="603.5" stroke="#5a5a5a"/><line x1="88" y1="593.5" x2="95" y2="593.5" stroke="#5a5a5a"/><text transform="translate(80.6 593.5) rotate(-90)" x="0" y="0" font-size="9.5" text-anchor="middle" fill="#000" font-family="Liberation Sans">-6</text><line x1="92" y1="583.5" x2="95" y2="583.5" stroke="#5a5a5a"/><line x1="88" y1="573.5" x2="95" y2="573.5" stroke="#5a5a5a"/><text transform="translate(80.6 573.5) rotate(-90)" x="0" y="0" font-size="9.5" text-anchor="middle" fill="#000" font-family="Liberation Sans">-4</text><line x1="92" y1="563.5" x2="95" y2="563.5" stroke="#5a5a5a"/><line x1="88" y1="553.5" x2="95" y2="553.5" stroke="#5a5a5a"/><text transform="translate(80.6 553.5) rotate(-90)" x="0" y="0" font-size="9.5" text-anchor="middle" fill="#000" font-family="Liberation Sans">-2</text><line x1="92" y1="543.5" x2="95" y2="543.5" stroke="#5a5a5a"/><line x1="88" y1="533.5" x2="95" y2="533.5" stroke="#5a5a5a"/><text transform="translate(80.6 533.5) rotate(-90)" x="0" y="0" font-size="9.5" text-anchor="middle" fill="#000" font-family="Liberation Sans">0</text><line x1="92" y1="523.5" x2="95" y2="523.5" stroke="#5a5a5a"/><line x1="88" y1="513.5" x2="95" y2="513.5" stroke="#5a5a5a"/><text transform="translate(80.6 513.5) rotate(-90)" x="0" y="0" font-size="9.5" text-anchor="middle" fill="#000" font-family="Liberation Sans">2</text><line x1="92" y1="503.5" x2="95" y2="503.5" stroke="#5a5a5a"/><line x1="88" y1="493.5" x2="95" y2="493.5" stroke="#5a5a5a"/><text transform="translate(80.6 493.5) rotate(-90)" x="0" y="0" font-size="9.5" text-anchor="middle" fill="#000" font-family="Liberation Sans">4</text><line x1="92" y1="483.5" x2="95" y2="483.5" stroke="#5a5a5a"/><line x1="88" y1="473.5" x2="95" y2="473.5" stroke="#5a5a5a"/><text transform="translate(80.6 473.5) rotate(-90)" x="0" y="0" font-size="9.5" text-anchor="middle" fill="#000" font-family="Liberation Sans">6</text><line x1="92" y1="463.5" x2="95" y2="463.5" stroke="#5a5a5a"/><line x1="88" y1="453.5" x2="95" y2="453.5" stroke="#5a5a5a"/><text transform="translate(80.6 453.5) rotate(-90)" x="0" y="0" font-size="9.5" text-anchor="middle" fill="#000" font-family="Liberation Sans">8</text><line x1="92" y1="443.5" x2="95" y2="443.5" stroke="#5a5a5a"/><line x1="88" y1="433.5" x2="95" y2="433.5" stroke="#5a5a5a"/><text transform="translate(80.6 433.5) rotate(-90)" x="0" y="0" font-size="9.5" text-anchor="middle" fill="#000" font-family="Liberation Sans">10</text><line x1="92" y1="423.5" x2="95" y2="423.5" stroke="#5a5a5a"/><line x1="88" y1="413.5" x2="95" y2="413.5" stroke="#5a5a5a"/><text transform="translate(80.6 413.5) rotate(-90)" x="0" y="0" font-size="9.5" text-anchor="middle" fill="#000" font-family="Liberation Sans">12</text><line x1="92" y1="403.5" x2="95" y2="403.5" stroke="#5a5a5a"/><line x1="88" y1="393.5" x2="95" y2="393.5" stroke="#5a5a5a"/><text transform="translate(80.6 393.5) rotate(-90)" x="0" y="0" font-size="9.5" text-anchor="middle" fill="#000" font-family="Liberation Sans">14</text><line x1="92" y1="383.5" x2="95" y2="383.5" stroke="#5a5a5a"/><line x1="88" y1="373.5" x2="95" y2="373.5" stroke="#5a5a5a"/><text transform="translate(80.6 373.5) rotate(-90)" x="0" y="0" font-size="9.5" text-anchor="middle" fill="#000" font-family="Liberation Sans">16</text><line x1="92" y1="363.5" x2="95" y2="363.5" stroke="#5a5a5a"/><line x1="88" y1="353.5" x2="95" y2="353.5" stroke="#5a5a5a"/><text transform="translate(80.6 353.5) rotate(-90)" x="0" y="0" font-size="9.5" text-anchor="middle" fill="#000" font-family="Liberation Sans">18</text><line x1="92" y1="343.5" x2="95" y2="343.5" stroke="#5a5a5a"/><line x1="88" y1="333.5" x2="95" y2="333.5" stroke="#5a5a5a"/><text transform="translate(80.6 333.5) rotate(-90)" x="0" y="0" font-size="9.5" text-anchor="middle" fill="#000" font-family="Liberation Sans">20</text><line x1="92" y1="323.5" x2="95" y2="323.5" stroke="#5a5a5a"/><line x1="88" y1="313.5" x2="95" y2="313.5" stroke="#5a5a5a"/><text transform="translate(80.6 313.5) rotate(-90)" x="0" y="0" font-size="9.5" text-anchor="middle" fill="#000" font-family="Liberation Sans">22</text><line x1="92" y1="303.5" x2="95" y2="303.5" stroke="#5a5a5a"/><line x1="88" y1="293.5" x2="95" y2="293.5" stroke="#5a5a5a"/><text transform="translate(80.6 293.5) rotate(-90)" x="0" y="0" font-size="9.5" text-anchor="middle" fill="#000" font-family="Liberation Sans">24</text><line x1="92" y1="283.5" x2="95" y2="283.5" stroke="#5a5a5a"/><line x1="88" y1="273.5" x2="95" y2="273.5" stroke="#5a5a5a"/><text transform="translate(80.6 273.5) rotate(-90)" x="0" y="0" font-size="9.5" text-anchor="middle" fill="#000" font-family="Liberation Sans">26</text><line x1="92" y1="263.5" x2="95" y2="263.5" stroke="#5a5a5a"/><line x1="88" y1="253.5" x2="95" y2="253.5" stroke="#5a5a5a"/><text transform="translate(80.6 253.5) rotate(-90)" x="0" y="0" font-size="9.5" text-anchor="middle" fill="#000" font-family="Liberation Sans">28</text><line x1="92" y1="243.5" x2="95" y2="243.5" stroke="#5a5a5a"/><line x1="88" y1="233.5" x2="95" y2="233.5" stroke="#5a5a5a"/><text transform="translate(80.6 233.5) rotate(-90)" x="0" y="0" font-size="9.5" text-anchor="middle" fill="#000" font-family="Liberation Sans">30</text><line x1="92" y1="223.5" x2="95" y2="223.5" stroke="#5a5a5a"/><line x1="88" y1="213.5" x2="95" y2="213.5" stroke="#5a5a5a"/><text transform="translate(80.6 213.5) rotate(-90)" x="0" y="0" font-size="9.5" text-anchor="middle" fill="#000" font-family="Liberation Sans">32</text><line x1="92" y1="203.5" x2="95" y2="203.5" stroke="#5a5a5a"/><line x1="88" y1="193.5" x2="95" y2="193.5" stroke="#5a5a5a"/><text transform="translate(80.6 193.5) rotate(-90)" x="0" y="0" font-size="9.5" text-anchor="middle" fill="#000" font-family="Liberation Sans">34</text><line x1="92" y1="183.5" x2="95" y2="183.5" stroke="#5a5a5a"/><line x1="88" y1="173.5" x2="95" y2="173.5" stroke="#5a5a5a"/><text transform="translate(80.6 173.5) rotate(-90)" x="0" y="0" font-size="9.5" text-anchor="middle" fill="#000" font-family="Liberation Sans">36</text><line x1="92" y1="163.5" x2="95" y2="163.5" stroke="#5a5a5a"/><line x1="88" y1="153.5" x2="95" y2="153.5" stroke="#5a5a5a"/><text transform="translate(80.6 153.5) rotate(-90)" x="0" y="0" font-size="9.5" text-anchor="middle" fill="#000" font-family="Liberation Sans">38</text><path d="M84.8 306.5 L84.8 318.3 L91 312.4 Z" fill="#000"/></svg>
<svg class="a" style="left:95px;top:155px" width="1043" height="577" viewBox="95 155 1043 577">
<rect x="95" y="155" width="1043" height="577" fill="#000"/>
<line x1="116.5" y1="155" x2="116.5" y2="732" stroke="#242424" stroke-width="1"/>
<line x1="216.5" y1="155" x2="216.5" y2="732" stroke="#242424" stroke-width="1"/>
<line x1="316.5" y1="155" x2="316.5" y2="732" stroke="#242424" stroke-width="1"/>
<line x1="416.5" y1="155" x2="416.5" y2="732" stroke="#242424" stroke-width="1"/>
<line x1="516.5" y1="155" x2="516.5" y2="732" stroke="#242424" stroke-width="1"/>
<line x1="616.5" y1="155" x2="616.5" y2="732" stroke="#242424" stroke-width="1"/>
<line x1="716.5" y1="155" x2="716.5" y2="732" stroke="#242424" stroke-width="1"/>
<line x1="816.5" y1="155" x2="816.5" y2="732" stroke="#242424" stroke-width="1"/>
<line x1="916.5" y1="155" x2="916.5" y2="732" stroke="#242424" stroke-width="1"/>
<line x1="1016.5" y1="155" x2="1016.5" y2="732" stroke="#242424" stroke-width="1"/>
<line x1="1116.5" y1="155" x2="1116.5" y2="732" stroke="#242424" stroke-width="1"/>
<line x1="95" y1="233.5" x2="1138" y2="233.5" stroke="#242424" stroke-width="1"/>
<line x1="95" y1="333.5" x2="1138" y2="333.5" stroke="#242424" stroke-width="1"/>
<line x1="95" y1="433.5" x2="1138" y2="433.5" stroke="#242424" stroke-width="1"/>
<line x1="95" y1="533.5" x2="1138" y2="533.5" stroke="#242424" stroke-width="1"/>
<line x1="95" y1="633.5" x2="1138" y2="633.5" stroke="#242424" stroke-width="1"/>
<defs><pattern id="dots" x="6" y="3" width="10" height="10" patternUnits="userSpaceOnUse"><rect x="0" y="0" width="1" height="1" fill="#4a4a4a"/></pattern></defs>
<rect x="95" y="155" width="1043" height="577" fill="url(#dots)"/>
<rect x="216.75" y="353.75" width="799.75" height="179.25" fill="none" stroke="#fff" stroke-width="2.3"/>
<line x1="96" y1="533.5" x2="137" y2="533.5" stroke="#a00000" stroke-width="1.2"/>
<line x1="116.5" y1="513" x2="116.5" y2="553" stroke="#a00000" stroke-width="1.2"/>
<line x1="316.5" y1="333" x2="316.5" y2="553" stroke="#ff1010" stroke-width="1.3" stroke-dasharray="17.7 7 1.6 6.75" stroke-dashoffset="14.35"/>
<line x1="916.5" y1="333" x2="916.5" y2="553" stroke="#ff1010" stroke-width="1.3" stroke-dasharray="17.7 7 1.6 6.75" stroke-dashoffset="14.35"/>
<line x1="196" y1="433.5" x2="1036" y2="433.5" stroke="#b04a4a" stroke-width="1.1" stroke-dasharray="17.7 7 1.6 6.77" stroke-dashoffset="1.63"/>
<circle cx="316.5" cy="433.5" r="40" fill="none" stroke="#c85050" stroke-width="2"/>
<rect x="311.5" y="388.5" width="10" height="10" fill="#0a7fa8" stroke="#1890b8" stroke-width="0.5"/>
<rect x="271.5" y="428.5" width="10" height="10" fill="#0a7fa8" stroke="#1890b8" stroke-width="0.5"/>
<rect x="351.5" y="428.5" width="10" height="10" fill="#0a7fa8" stroke="#1890b8" stroke-width="0.5"/>
<rect x="311.5" y="468.5" width="10" height="10" fill="#0a7fa8" stroke="#1890b8" stroke-width="0.5"/>
<circle cx="316.5" cy="433.5" r="5" fill="#0000c8" stroke="#3030e0" stroke-width="0.5"/>
<circle cx="916.5" cy="433.5" r="40" fill="none" stroke="#c85050" stroke-width="2"/>
<rect x="911.5" y="388.5" width="10" height="10" fill="#0a7fa8" stroke="#1890b8" stroke-width="0.5"/>
<rect x="871.5" y="428.5" width="10" height="10" fill="#0a7fa8" stroke="#1890b8" stroke-width="0.5"/>
<rect x="951.5" y="428.5" width="10" height="10" fill="#0a7fa8" stroke="#1890b8" stroke-width="0.5"/>
<rect x="911.5" y="468.5" width="10" height="10" fill="#0a7fa8" stroke="#1890b8" stroke-width="0.5"/>
<circle cx="916.5" cy="433.5" r="5" fill="#0000c8" stroke="#3030e0" stroke-width="0.5"/>
<text transform="translate(426.6 526) rotate(-90) scale(0.983 1)" font-size="28.6" fill="#fff" font-family="Liberation Sans">104.245.02.4B</text>
<rect x="191.5" y="428.5" width="10" height="10" fill="#0000b8" stroke="#7040b0" stroke-width="1"/>
<path d="M196.5 428.5 L196.5 438.5 M191.5 433.5 L201.5 433.5" stroke="#a01870" stroke-width="1.6"/>
<path d="M193 428.5 L200 428.5 M193 438.5 L200 438.5 M191.5 430 L191.5 437 M201.5 430 L201.5 437" stroke="#d02040" stroke-width="0.8" opacity="0.7"/>
<rect x="1031.5" y="428.5" width="10" height="10" fill="#c00020" stroke="#e04050" stroke-width="0.5"/>
</svg>
<div class="a" style="left:1138px;top:155px;width:16px;height:592px;background:#f7f7f7"></div>
<div class="a" style="left:1143px;top:282px;width:8px;height:322px;background:#808080;border-radius:4px"></div>
<div class="a" style="left:95px;top:732px;width:1043px;height:16px;background:#f7f7f7"></div>
<div class="a" style="left:281px;top:737px;width:632px;height:8px;background:#808080;border-radius:4px"></div>
<div class="a" style="left:1099px;top:732px;width:55px;height:16px;background:#ececec"></div>
<div class="a" style="left:1090px;top:733.5px;width:64px;text-align:right;font-size:12.6px;color:#111">1 &lt; 10</div>
<div class="a" style="left:72px;top:748px;width:1082px;height:2px;background:#c8c8c8"></div>
<div class="a" style="left:72px;top:750px;width:1082px;height:48px;background:#ececec"></div>
<div class="a" style="left:73px;top:750px;width:1080px;height:21px;background:#fff;border-bottom:1px solid #cfcfcf"></div>
<div class="a" style="left:77px;top:751px;font-size:13.3px;color:#111">Undo: Spostare selezione</div>
<div class="a" style="left:1144px;top:750px;width:7px;height:18px;background:#808080;border-radius:0 0 4px 4px"></div>
<div class="a" style="left:73px;top:778px;font-size:13.3px;color:#111">Comando:</div>
<div class="a" style="left:72px;top:796px;width:1083px;height:2px;background:#d4d4d4"></div>
<div class="a" style="left:138px;top:776px;width:989px;height:18px;background:#fff"></div>
<div class="a" style="left:1127px;top:772px;width:26px;height:25px;border:1px solid #b4b4b4;background:linear-gradient(#f4f4f4,#e8e8e8)"></div>
<svg class="a" style="left:1127px;top:772px" width="26" height="25" viewBox="1127 772 26 25"><rect x="1133.5" y="780.5" width="13" height="9.5" fill="#f2f2f2" stroke="#222" stroke-width="1"/><rect x="1133.5" y="780.5" width="13" height="2.5" fill="#111"/><rect x="1144" y="781" width="1" height="1" fill="#fff"/></svg>
<div class="a" style="left:1154px;top:107px;width:2px;height:691px;background:#c0c0c0"></div>
<div class="a" style="left:1156px;top:107px;width:298px;height:23px;background:linear-gradient(#e6e6e6,#d8d8d8)"></div>
<div class="a" style="left:1194px;top:112px;width:260px;text-align:center;font-size:12px;color:#222">Elenco dei livelli</div>
<div class="a" style="left:1156px;top:130px;width:298px;height:27px;background:#e2e2e2"></div>
<div class="a" style="left:1155px;top:130px;width:60px;height:26px;border:1px solid #9a9a9a;background:linear-gradient(#f6f6f6,#ececec)"></div>
<div class="a" style="left:1215px;top:130px;width:60px;height:26px;border:1px solid #9a9a9a;background:linear-gradient(#f6f6f6,#ececec)"></div>
<div class="a" style="left:1275px;top:130px;width:60px;height:26px;border:1px solid #9a9a9a;background:linear-gradient(#f6f6f6,#ececec)"></div>
<div class="a" style="left:1335px;top:130px;width:60px;height:26px;border:1px solid #9a9a9a;background:linear-gradient(#f6f6f6,#ececec)"></div>
<div class="a" style="left:1395px;top:130px;width:59px;height:26px;border:1px solid #9a9a9a;background:linear-gradient(#f6f6f6,#ececec)"></div>
<div class="a" style="left:1156px;top:157px;width:298px;height:641px;background:#fff"></div>
<div class="a" style="left:1161px;top:163px;width:16px;height:9px;background:#fff;border:1px solid #000"></div>
<div class="a" style="left:1183px;top:159px;font-size:13.5px;color:#111">0</div>
<div class="a" style="left:1161px;top:183px;width:16px;height:9px;background:#f00;border:1px solid #000"></div>
<div class="a" style="left:1183px;top:179px;font-size:13.5px;color:#111">Center</div>
<div class="a" style="left:1161px;top:203px;width:16px;height:9px;background:#000;border:1px solid #000"></div>
<div class="a" style="left:1183px;top:199px;font-size:13.5px;color:#111">Hidden</div>
<div class="a" style="left:1161px;top:223px;width:16px;height:9px;background:#fff;border:1px solid #000"></div>
<div class="a" style="left:1183px;top:219px;font-size:13.5px;color:#111">Visible</div>
<div class="a" style="left:1454px;top:107px;width:46px;height:691px;border-left:1px solid #c4c4c4;background:linear-gradient(90deg,#efefef,#d8d8d8 60%,#c4c4c4 94%,#b4b4b4)"></div>
<svg class="a" style="left:1150px;top:105px" width="350" height="400" viewBox="1150 105 350 400"><circle cx="1164" cy="118" r="6.8" fill="#6e6e6e"/><path d="M1161.3 115.3 L1166.7 120.7 M1166.7 115.3 L1161.3 120.7" stroke="#fff" stroke-width="1.7"/><circle cx="1182" cy="118" r="6.8" fill="#6e6e6e"/><rect x="1178.5" y="117" width="4.5" height="4" fill="none" stroke="#fff" stroke-width="1.1"/><path d="M1180.5 116.5 L1180.5 114.6 L1185.5 114.6 L1185.5 118.8 L1183.5 118.8" fill="none" stroke="#fff" stroke-width="1.1"/><g transform="translate(1185 143) scale(1.0)"><path d="M-7.6 0 C-4.8 -6.8 4.8 -6.8 7.6 0 C4.8 6.2 -4.8 6.2 -7.6 0 Z" fill="#000"/><path d="M-5.3 0.9 C-3.2 -2.6 3.2 -2.6 5.3 0.9 C3.2 3.9 -3.2 3.9 -5.3 0.9 Z" fill="#fff"/><circle cx="-0.2" cy="0" r="2.5" fill="#000"/><circle cx="-0.9" cy="-0.5" r="0.7" fill="#fff"/></g><g transform="translate(1245 143) scale(1.0)"><path d="M-7.6 0 C-4.8 -6.8 4.8 -6.8 7.6 0 C4.8 6.2 -4.8 6.2 -7.6 0 Z" fill="#b4b4b4"/><path d="M-5.3 0.9 C-3.2 -2.6 3.2 -2.6 5.3 0.9 C3.2 3.9 -3.2 3.9 -5.3 0.9 Z" fill="#fff"/><circle cx="-0.2" cy="0" r="2.5" fill="#b4b4b4"/><circle cx="-0.9" cy="-0.5" r="0.7" fill="#fff"/></g><path d="M1300 143 L1310 143 M1305 138 L1305 148" stroke="#e00000" stroke-width="3"/><path d="M1360 142.5 L1370 142.5" stroke="#e00000" stroke-width="3"/><path d="M1418.50 149.50 L1421.66 148.09 L1431.94 137.40 L1430.06 135.60 L1419.78 146.29 Z" fill="#e8b040" stroke="#8a5a10" stroke-width="0.6" stroke-linejoin="round"/><path d="M1430.41 138.99 L1431.94 137.40 L1430.06 135.60 L1428.54 137.18 Z" fill="#e02020"/><path d="M1418.50 149.50 L1419.85 148.85 L1419.10 148.13 Z" fill="#333"/><g transform="translate(1423 166.7) scale(1.0)"><path d="M-7.6 0 C-4.8 -6.8 4.8 -6.8 7.6 0 C4.8 6.2 -4.8 6.2 -7.6 0 Z" fill="#000"/><path d="M-5.3 0.9 C-3.2 -2.6 3.2 -2.6 5.3 0.9 C3.2 3.9 -3.2 3.9 -5.3 0.9 Z" fill="#fff"/><circle cx="-0.2" cy="0" r="2.5" fill="#000"/><circle cx="-0.9" cy="-0.5" r="0.7" fill="#fff"/></g><path d="M1442.1 166.5 L1442.1 164.5 A2.9 3.6 0 0 1 1447.8999999999999 164.5 L1447.8999999999999 166.5" fill="none" stroke="#b6b6b6" stroke-width="1.5"/><rect x="1440.3" y="166.3" width="9.5" height="7.3" fill="#b6b6b6"/><g transform="translate(1423 186.7) scale(1.0)"><path d="M-7.6 0 C-4.8 -6.8 4.8 -6.8 7.6 0 C4.8 6.2 -4.8 6.2 -7.6 0 Z" fill="#000"/><path d="M-5.3 0.9 C-3.2 -2.6 3.2 -2.6 5.3 0.9 C3.2 3.9 -3.2 3.9 -5.3 0.9 Z" fill="#fff"/><circle cx="-0.2" cy="0" r="2.5" fill="#000"/><circle cx="-0.9" cy="-0.5" r="0.7" fill="#fff"/></g><path d="M1442.1 186.5 L1442.1 184.5 A2.9 3.6 0 0 1 1447.8999999999999 184.5 L1447.8999999999999 186.5" fill="none" stroke="#b6b6b6" stroke-width="1.5"/><rect x="1440.3" y="186.3" width="9.5" height="7.3" fill="#b6b6b6"/><g transform="translate(1423 206.7) scale(1.0)"><path d="M-7.6 0 C-4.8 -6.8 4.8 -6.8 7.6 0 C4.8 6.2 -4.8 6.2 -7.6 0 Z" fill="#000"/><path d="M-5.3 0.9 C-3.2 -2.6 3.2 -2.6 5.3 0.9 C3.2 3.9 -3.2 3.9 -5.3 0.9 Z" fill="#fff"/><circle cx="-0.2" cy="0" r="2.5" fill="#000"/><circle cx="-0.9" cy="-0.5" r="0.7" fill="#fff"/></g><path d="M1442.1 206.5 L1442.1 204.5 A2.9 3.6 0 0 1 1447.8999999999999 204.5 L1447.8999999999999 206.5" fill="none" stroke="#b6b6b6" stroke-width="1.5"/><rect x="1440.3" y="206.3" width="9.5" height="7.3" fill="#b6b6b6"/><g transform="translate(1423 226.7) scale(1.0)"><path d="M-7.6 0 C-4.8 -6.8 4.8 -6.8 7.6 0 C4.8 6.2 -4.8 6.2 -7.6 0 Z" fill="#000"/><path d="M-5.3 0.9 C-3.2 -2.6 3.2 -2.6 5.3 0.9 C3.2 3.9 -3.2 3.9 -5.3 0.9 Z" fill="#fff"/><circle cx="-0.2" cy="0" r="2.5" fill="#000"/><circle cx="-0.9" cy="-0.5" r="0.7" fill="#fff"/></g><path d="M1442.1 226.5 L1442.1 224.5 A2.9 3.6 0 0 1 1447.8999999999999 224.5 L1447.8999999999999 226.5" fill="none" stroke="#b6b6b6" stroke-width="1.5"/><rect x="1440.3" y="226.3" width="9.5" height="7.3" fill="#b6b6b6"/><path d="M1394.60 233.10 L1397.83 231.88 L1408.58 221.95 L1406.82 220.05 L1396.07 229.97 Z" fill="#e8b040" stroke="#8a5a10" stroke-width="0.6" stroke-linejoin="round"/><path d="M1406.97 223.45 L1408.58 221.95 L1406.82 220.05 L1405.20 221.54 Z" fill="#e02020"/><path d="M1394.60 233.10 L1395.98 232.53 L1395.28 231.77 Z" fill="#333"/><rect x="1462.0" y="116" width="2" height="2" fill="#9a9a9a"/><rect x="1468.1" y="116" width="2" height="2" fill="#9a9a9a"/><rect x="1474.2" y="116" width="2" height="2" fill="#9a9a9a"/><rect x="1480.3" y="116" width="2" height="2" fill="#9a9a9a"/><rect x="1486.4" y="116" width="2" height="2" fill="#9a9a9a"/><rect x="1456" y="120" width="43" height="42.5" rx="5" fill="#b8b8b8"/><rect x="1456" y="417" width="43" height="42.5" rx="5" fill="#b8b8b8"/><line x1="1457" y1="261.5" x2="1500" y2="261.5" stroke="#666" stroke-width="1" stroke-dasharray="1 2"/><line x1="1457" y1="409.5" x2="1500" y2="409.5" stroke="#666" stroke-width="1" stroke-dasharray="1 2"/><rect x="1463.5" y="127.5" width="27" height="27" fill="#fff" stroke="#000" stroke-width="1"/><rect x="1463.5" y="127.5" width="27" height="4.5" fill="#000"/><rect x="1464.8" y="128.6" width="2.8" height="2.6" fill="#fff"/><rect x="1463.5" y="174.5" width="27" height="27" fill="#fff" stroke="#000" stroke-width="1"/><rect x="1463.5" y="174.5" width="27" height="4.5" fill="#000"/><rect x="1464.8" y="175.6" width="2.8" height="2.6" fill="#fff"/><rect x="1463.5" y="220.5" width="27" height="27" fill="#fff" stroke="#000" stroke-width="1"/><rect x="1463.5" y="220.5" width="27" height="4.5" fill="#000"/><rect x="1464.8" y="221.6" width="2.8" height="2.6" fill="#fff"/><rect x="1463.5" y="276.5" width="27" height="27" fill="#fff" stroke="#000" stroke-width="1"/><rect x="1463.5" y="276.5" width="27" height="4.5" fill="#000"/><rect x="1464.8" y="277.6" width="2.8" height="2.6" fill="#fff"/><rect x="1463.5" y="322.5" width="27" height="27" fill="#fff" stroke="#000" stroke-width="1"/><rect x="1463.5" y="322.5" width="27" height="4.5" fill="#000"/><rect x="1464.8" y="323.6" width="2.8" height="2.6" fill="#fff"/><rect x="1463.5" y="368.5" width="27" height="27" fill="#fff" stroke="#000" stroke-width="1"/><rect x="1463.5" y="368.5" width="27" height="4.5" fill="#000"/><rect x="1464.8" y="369.6" width="2.8" height="2.6" fill="#fff"/><rect x="1463.5" y="424.5" width="27" height="27" fill="#fff" stroke="#000" stroke-width="1"/><rect x="1463.5" y="424.5" width="27" height="4.5" fill="#000"/><rect x="1464.8" y="425.6" width="2.8" height="2.6" fill="#fff"/><rect x="1463.5" y="471.5" width="27" height="27" fill="#fff" stroke="#000" stroke-width="1"/><rect x="1463.5" y="471.5" width="27" height="4.5" fill="#000"/><rect x="1464.8" y="472.6" width="2.8" height="2.6" fill="#fff"/><path d="M1471 140 L1475.5 137 L1475.5 148.5 L1471 151.5 Z" fill="#8a8a8a" stroke="#444" stroke-width="0.5"/><path d="M1473.5 139.5 L1478 136.5 L1478 148 L1473.5 151 Z" fill="#d8d8d8" stroke="#444" stroke-width="0.5"/><path d="M1475.5 139 L1483.5 135.5 L1483.5 147.5 L1475.5 151 Z" fill="#fff" stroke="#555" stroke-width="0.6"/><path d="M1477 148.5 L1481.5 139 L1481.5 147 Z" fill="none" stroke="#f03030" stroke-width="0.8"/><rect x="1470.5" y="184.5" width="10" height="7.5" fill="#f6eec0" stroke="#333" stroke-width="0.7"/><circle cx="1479" cy="191.5" r="4.5" fill="#f6eec0" fill-opacity="0.85" stroke="#333" stroke-width="0.7"/><rect x="1469.5" y="230.5" width="15" height="11" rx="2.5" fill="#f4f4f4" stroke="#b8c8e0" stroke-width="0.8"/><rect x="1466.5" y="284.0" width="3.2" height="3" fill="#000"/><rect x="1472.5" y="284.0" width="14.5" height="3" fill="#fff" stroke="#333" stroke-width="0.6"/><rect x="1466.5" y="289.5" width="3.2" height="3" fill="#000"/><rect x="1472.5" y="289.5" width="14.5" height="3" fill="#fff" stroke="#333" stroke-width="0.6"/><rect x="1466.5" y="295.0" width="3.2" height="3" fill="#000"/><rect x="1472.5" y="295.0" width="14.5" height="3" fill="#fff" stroke="#333" stroke-width="0.6"/><path d="M1469.5 331 L1484.5 331 L1478.5 338 L1478.5 346 L1475.5 344.5 L1475.5 338 Z" fill="#a8a8a8" stroke="#666" stroke-width="0.6"/><ellipse cx="1477" cy="331" rx="7.5" ry="1.5" fill="#d0d0d0" stroke="#666" stroke-width="0.5"/><path d="M1467 375 L1472 378.5 L1472 386 L1467 389.5 Z" fill="#fff" stroke="#555" stroke-width="0.6"/><rect x="1472" y="378.5" width="12" height="7.5" fill="#b0b0b0" stroke="#555" stroke-width="0.5"/><line x1="1465" y1="382.3" x2="1489" y2="382.3" stroke="#f04040" stroke-width="0.6" stroke-dasharray="2 1"/><line x1="1466" y1="433" x2="1478" y2="433" stroke="#777" stroke-width="0.7"/><line x1="1466" y1="436" x2="1480" y2="436" stroke="#777" stroke-width="0.7"/><line x1="1466" y1="439" x2="1478" y2="439" stroke="#777" stroke-width="0.7"/><line x1="1466" y1="442" x2="1480" y2="442" stroke="#777" stroke-width="0.7"/><line x1="1463.5" y1="447.5" x2="1490.5" y2="447.5" stroke="#000" stroke-width="0.6"/><line x1="1475" y1="449.5" x2="1488" y2="449.5" stroke="#333" stroke-width="0.8"/><line x1="1466" y1="449.5" x2="1468" y2="449.5" stroke="#333" stroke-width="0.8"/><rect x="1471" y="479.5" width="12.5" height="15" rx="1" fill="#c8862a" stroke="#8a5a18" stroke-width="0.5"/><rect x="1472.5" y="481.5" width="9.5" height="12" fill="#f6f6f6"/><rect x="1474" y="478.5" width="6.5" height="2.5" fill="#8c8c80"/><line x1="1474" y1="484.0" x2="1480" y2="484.0" stroke="#c0c0c0" stroke-width="0.6"/><line x1="1474" y1="486.5" x2="1480" y2="486.5" stroke="#c0c0c0" stroke-width="0.6"/><line x1="1474" y1="489.0" x2="1480" y2="489.0" stroke="#c0c0c0" stroke-width="0.6"/></svg><svg class="a" style="left:72px;top:107px" width="50" height="25" viewBox="72 107 50 25"><path d="M78.5 116 L86.5 124 M86.5 116 L78.5 124" stroke="#6a6a6a" stroke-width="1"/><circle cx="102" cy="118.5" r="5.6" fill="#f6f6f6" stroke="#2a3a8a" stroke-width="1.8"/><path d="M99 116 L104 116 M99 118 L104 118" stroke="#c88" stroke-width="0.5"/><path d="M101.5 118 L106 123" stroke="#f0b020" stroke-width="1.6"/><circle cx="106" cy="123" r="0.9" fill="#e05050"/></svg>
<div class="a" style="left:0;top:798px;width:1500px;height:46px;background:#dadada"></div>
<svg class="a" style="left:0;top:798px" width="1500" height="46" viewBox="0 798 1500 46">
<rect x="253" y="802" width="1" height="40" fill="#8a8a8a"/>
<text x="2" y="816.5" font-size="10.3" fill="#111" font-family="Liberation Sans" text-anchor="start" textLength="73" lengthAdjust="spacing">36.9407,22.096</text>
<text x="2" y="836.5" font-size="10.3" fill="#111" font-family="Liberation Sans" text-anchor="start" textLength="80" lengthAdjust="spacing">@28.9407,12.096</text>
<text x="256" y="816.5" font-size="10.3" fill="#111" font-family="Liberation Sans" text-anchor="start" textLength="58.5" lengthAdjust="spacing">43.0447&lt;31°</text>
<text x="256" y="836.5" font-size="10.3" fill="#111" font-family="Liberation Sans" text-anchor="start" textLength="68" lengthAdjust="spacing">@31.3668&lt;23°</text>
<text x="571.5" y="820" font-size="10.3" fill="#111" font-family="Liberation Sans" text-anchor="start" textLength="126.5" lengthAdjust="spacing">Selezionare entità o regione</text>
<text x="569" y="831" font-size="10.3" fill="#111" font-family="Liberation Sans" text-anchor="start" textLength="129" lengthAdjust="spacing">Spostare entità o riferimento</text>
<text x="949" y="820" font-size="10.3" fill="#111" font-family="Liberation Sans" text-anchor="start" textLength="84" lengthAdjust="spacing">Entità selezionate:</text>
<text x="949" y="831" font-size="10.3" fill="#111" font-family="Liberation Sans" text-anchor="start" textLength="83" lengthAdjust="spacing">3 entità su 2 livelli</text>
</svg>
<svg class="a" style="left:500px;top:800px" width="800" height="44" viewBox="500 800 800 44">
<circle cx="509" cy="821.5" r="3" fill="#c6c6c6"/>
<circle cx="942" cy="821.5" r="3" fill="#c6c6c6"/>
<circle cx="1271" cy="821.5" r="3" fill="#c6c6c6"/>
<path d="M726 806.5 C720 806.5 717.5 810 717.5 815 L717.5 826 C717.5 832 721 835 726 835 C731 835 734.5 832 734.5 826 L734.5 815 C734.5 810 732 806.5 726 806.5 Z" fill="#fff" stroke="#333" stroke-width="0.9"/>
<path d="M717.5 817.5 L734.5 817.5 M726 806.5 L726 817.5" stroke="#333" stroke-width="0.8" fill="none"/>
<rect x="724.3" y="809" width="3.4" height="5.5" rx="1.7" fill="#fff" stroke="#333" stroke-width="0.8"/>
</svg>
</body></html>
